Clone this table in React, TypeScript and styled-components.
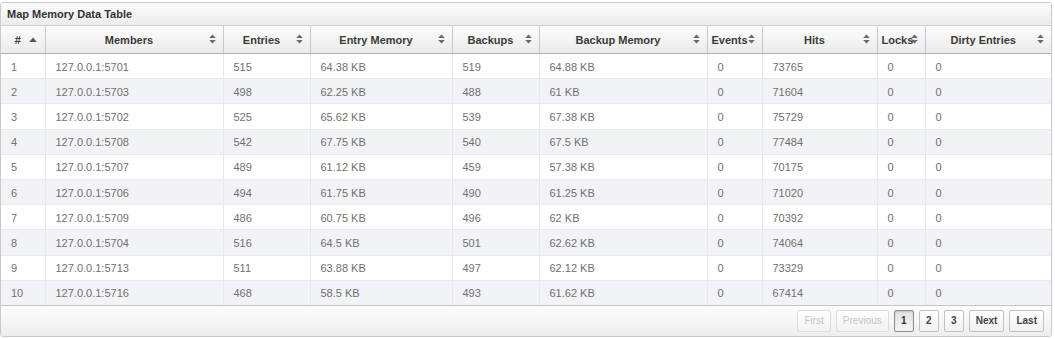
import React from "react";
import styled, { createGlobalStyle } from "styled-components";

const GlobalStyle = createGlobalStyle`
  html, body {
    margin: 0;
    padding: 0;
    background: #ffffff;
  }
  body {
    font-family: "Liberation Sans", Arial, sans-serif;
  }
`;

type Row = [string, string, string, string, string, string, string, string, string];

const rows: Row[] = [
  ["127.0.0.1:5701", "515", "64.38 KB", "519", "64.88 KB", "0", "73765", "0", "0"],
  ["127.0.0.1:5703", "498", "62.25 KB", "488", "61 KB", "0", "71604", "0", "0"],
  ["127.0.0.1:5702", "525", "65.62 KB", "539", "67.38 KB", "0", "75729", "0", "0"],
  ["127.0.0.1:5708", "542", "67.75 KB", "540", "67.5 KB", "0", "77484", "0", "0"],
  ["127.0.0.1:5707", "489", "61.12 KB", "459", "57.38 KB", "0", "70175", "0", "0"],
  ["127.0.0.1:5706", "494", "61.75 KB", "490", "61.25 KB", "0", "71020", "0", "0"],
  ["127.0.0.1:5709", "486", "60.75 KB", "496", "62 KB", "0", "70392", "0", "0"],
  ["127.0.0.1:5704", "516", "64.5 KB", "501", "62.62 KB", "0", "74064", "0", "0"],
  ["127.0.0.1:5713", "511", "63.88 KB", "497", "62.12 KB", "0", "73329", "0", "0"],
  ["127.0.0.1:5716", "468", "58.5 KB", "493", "61.62 KB", "0", "67414", "0", "0"],
];

const columns = [
  { label: "#", width: 44, sorted: true },
  { label: "Members", width: 178 },
  { label: "Entries", width: 87 },
  { label: "Entry Memory", width: 142 },
  { label: "Backups", width: 87 },
  { label: "Backup Memory", width: 168 },
  { label: "Events", width: 55 },
  { label: "Hits", width: 115 },
  { label: "Locks", width: 48 },
  { label: "Dirty Entries", width: 126 },
];

const SortBoth = () => (
  <svg width="7" height="10" viewBox="0 0 7 10">
    <path d="M3.5 0.5 L6.8 4 L0.2 4 Z" fill="#6a6a6a" />
    <path d="M3.5 9.5 L6.8 6 L0.2 6 Z" fill="#6a6a6a" />
  </svg>
);

const SortUp = () => (
  <svg width="8" height="6" viewBox="0 0 8 6">
    <path d="M4 0.5 L7.8 5 L0.2 5 Z" fill="#555" />
  </svg>
);

const pages = [
  { label: "First", state: "disabled" },
  { label: "Previous", state: "disabled" },
  { label: "1", state: "active" },
  { label: "2", state: "normal" },
  { label: "3", state: "normal" },
  { label: "Next", state: "normal" },
  { label: "Last", state: "normal" },
] as const;

export default function App() {
  return (
    <>
      <GlobalStyle />
      <Panel>
        <TitleBar>Map Memory Data Table</TitleBar>
        <Table>
          <colgroup>
            {columns.map((c) => (
              <col key={c.label} style={{ width: c.width }} />
            ))}
          </colgroup>
          <thead>
            <tr>
              {columns.map((c) => (
                <HeadCell key={c.label}>
                  {c.label}
                  <SortIcon $up={c.sorted}>{c.sorted ? <SortUp /> : <SortBoth />}</SortIcon>
                </HeadCell>
              ))}
            </tr>
          </thead>
          <tbody>
            {rows.map((r, i) => (
              <BodyRow key={i} $even={i % 2 === 1}>
                <Cell>{i + 1}</Cell>
                {r.map((v, j) => (
                  <Cell key={j}>{v}</Cell>
                ))}
              </BodyRow>
            ))}
          </tbody>
        </Table>
        <Footer>
          {pages.map((p) => (
            <PageButton key={p.label} $state={p.state}>
              {p.label}
            </PageButton>
          ))}
        </Footer>
      </Panel>
    </>
  );
}

const Panel = styled.div`
  width: 1052px;
  margin-top: 2px;
  box-sizing: border-box;
  border: 1px solid #c9c9c9;
  border-radius: 3px;
  overflow: hidden;
  background: #fff;
`;

const TitleBar = styled.div`
  height: 22px;
  line-height: 22px;
  padding-left: 6px;
  font-size: 11px;
  font-weight: bold;
  color: #333;
  background: linear-gradient(#fbfbfb, #ececec);
  border-bottom: 1px solid #cfcfcf;
`;

const Table = styled.table`
  width: 1050px;
  table-layout: fixed;
  border-collapse: collapse;
  border-spacing: 0;
`;

const HeadCell = styled.th`
  position: relative;
  height: 27px;
  padding: 0 14px 0 4px;
  font-size: 11px;
  font-weight: bold;
  color: #3a3a3a;
  text-align: center;
  white-space: nowrap;
  background: linear-gradient(#fcfcfc, #ebebeb);
  border-left: 1px solid #c4c9d6;
  border-bottom: 1px solid #aab1c2;
  &:first-child {
    border-left: none;
  }
`;

const SortIcon = styled.span<{ $up?: boolean }>`
  position: absolute;
  right: ${(p) => (p.$up ? "8px" : "7px")};
  top: ${(p) => (p.$up ? "11px" : "8px")};
  line-height: 0;
`;

const BodyRow = styled.tr<{ $even: boolean }>`
  height: 25.2px;
  background: ${(p) => (p.$even ? "#f2f3f7" : "#ffffff")};
`;

const Cell = styled.td`
  padding: 1px 0 0 10px;
  font-size: 11px;
  color: #707070;
  white-space: nowrap;
  overflow: hidden;
  border-left: 1px solid #e5e7ed;
  border-bottom: 1px solid #e8eaef;
  &:first-child {
    border-left: none;
  }
  tr:last-child > & {
    border-bottom: 1px solid #c4c4c4;
  }
`;

const Footer = styled.div`
  height: 30px;
  display: flex;
  align-items: center;
  justify-content: flex-end;
  gap: 5px;
  padding-right: 7px;
  background: linear-gradient(#fdfdfd, #eeeeee);
`;

const PageButton = styled.span<{ $state: "disabled" | "active" | "normal" }>`
  box-sizing: border-box;
  height: 22px;
  line-height: 20px;
  padding: 0 6px;
  min-width: 20px;
  text-align: center;
  font-size: 10px;
  font-weight: ${(p) => (p.$state === "disabled" ? "normal" : "bold")};
  color: ${(p) =>
    p.$state === "disabled" ? "#c4c4c4" : p.$state === "active" ? "#333" : "#444"};
  border: 1px solid
    ${(p) => (p.$state === "disabled" ? "#dcdcdc" : p.$state === "active" ? "#8e8e8e" : "#c2c2c2")};
  border-radius: 2px;
  background: ${(p) =>
    p.$state === "active"
      ? "linear-gradient(#e4e4e4, #f4f4f4)"
      : "linear-gradient(#ffffff, #f1f1f1)"};
  box-shadow: ${(p) => (p.$state === "active" ? "inset 0 1px 2px rgba(0,0,0,0.15)" : "none")};
`;
